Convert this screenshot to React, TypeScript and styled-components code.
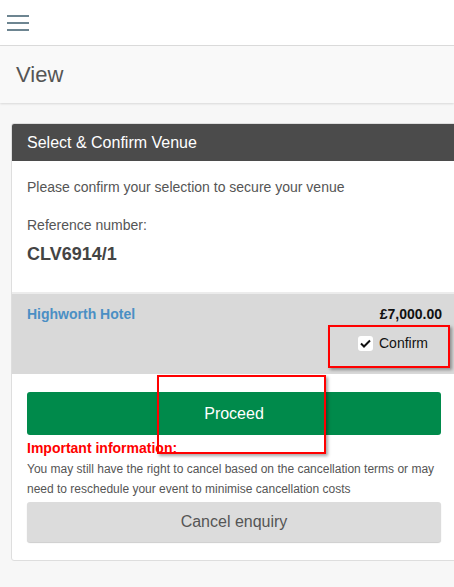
import React, { useState } from 'react';
import styled, { createGlobalStyle } from 'styled-components';

const GlobalStyle = createGlobalStyle`
  html, body {
    margin: 0;
    padding: 0;
    background: #f7f7f7;
    overflow: hidden;
  }
  body {
    font-family: "Liberation Sans", Arial, sans-serif;
    color: #555;
  }
`;

const Page = styled.div`
  width: 454px;
  height: 587px;
  position: relative;
  background: #f7f7f7;
`;

const TopBar = styled.div`
  height: 45px;
  background: #fff;
  border-bottom: 1px solid #dcdcdc;
  display: flex;
  align-items: center;
  padding-left: 7px;
`;

const Burger = styled.button`
  width: 22px;
  height: 16px;
  padding: 0;
  border: none;
  background: none;
  display: flex;
  flex-direction: column;
  justify-content: space-between;
  cursor: pointer;

  & > span {
    display: block;
    height: 2px;
    width: 22px;
    background: #6d8591;
  }
`;

const TitleBar = styled.div`
  height: 57px;
  background: #f9f9f9;
  box-shadow: 0 1px 2px rgba(0, 0, 0, 0.12);
  display: flex;
  align-items: center;
  padding-left: 16px;
`;

const Title = styled.h1`
  margin: 0;
  font-size: 22px;
  font-weight: normal;
  color: #555;
`;

const Card = styled.section`
  margin: 20px 0 0 11px;
  width: 445px;
  background: #fff;
  border: 1px solid #dedede;
  border-radius: 3px;
  overflow: hidden;
`;

const CardHeader = styled.div`
  height: 37px;
  background: #4b4b4b;
  color: #fff;
  font-size: 16px;
  display: flex;
  align-items: center;
  padding-left: 15px;
`;

const CardBody = styled.div`
  padding: 16px 15px 27px;
`;

const Text = styled.p<{ $gap?: number }>`
  margin: ${p => p.$gap ?? 0}px 0 0;
  font-size: 14px;
  color: #555;
  line-height: 20px;
`;

const RefNumber = styled.div`
  margin-top: 9px;
  font-size: 18px;
  font-weight: bold;
  color: #444;
`;

const Venue = styled.div`
  background: #d9d9d9;
  border-top: 2px solid #ececec;
  height: 82px;
  padding: 12px 15px 0;
  box-sizing: border-box;
  display: flex;
  justify-content: space-between;
`;

const VenueName = styled.a`
  font-size: 14px;
  font-weight: bold;
  color: #4b8fc4;
  text-decoration: none;
`;

const VenueSide = styled.div`
  display: flex;
  flex-direction: column;
  align-items: flex-end;
`;

const Price = styled.div`
  font-size: 14px;
  font-weight: bold;
  color: #111;
`;

const ConfirmLabel = styled.label`
  margin-top: 13px;
  margin-right: 14px;
  display: flex;
  align-items: center;
  gap: 6px;
  font-size: 14px;
  color: #111;
  cursor: pointer;
`;

const CheckBox = styled.span`
  width: 15px;
  height: 15px;
  border-radius: 3px;
  background: #fff;
  display: flex;
  align-items: center;
  justify-content: center;
`;

const Actions = styled.div`
  padding: 18px 15px 18px;
`;

const Button = styled.button<{ $primary?: boolean }>`
  width: 414px;
  height: ${p => (p.$primary ? '43px' : '40px')};
  border: none;
  border-radius: 3px;
  font-family: inherit;
  font-size: 16px;
  cursor: pointer;
  background: ${p => (p.$primary ? '#008a4b' : '#dcdcdc')};
  color: ${p => (p.$primary ? '#fff' : '#555')};
  box-shadow: ${p => (p.$primary ? 'none' : '0 1px 1px rgba(0,0,0,0.2)')};
`;

const Important = styled.div`
  margin-top: 5px;
  font-size: 14px;
  font-weight: bold;
  color: #ff0000;
`;

const Small = styled.p`
  margin: 3px 0 3px;
  font-size: 12px;
  line-height: 20px;
  color: #555;
`;

const Highlight = styled.div<{ $x: number; $y: number; $w: number; $h: number }>`
  position: absolute;
  left: ${p => p.$x}px;
  top: ${p => p.$y}px;
  width: ${p => p.$w}px;
  height: ${p => p.$h}px;
  box-sizing: border-box;
  border: 2px solid #f00;
  box-shadow: 2px 2px 3px rgba(0, 0, 0, 0.35);
  pointer-events: none;
`;

export default function App() {
  const [confirmed, setConfirmed] = useState(true);

  return (
    <Page>
      <GlobalStyle />
      <TopBar>
        <Burger aria-label="menu">
          <span />
          <span />
          <span />
        </Burger>
      </TopBar>
      <TitleBar>
        <Title>View</Title>
      </TitleBar>

      <Card>
        <CardHeader>Select &amp; Confirm Venue</CardHeader>
        <CardBody>
          <Text>Please confirm your selection to secure your venue</Text>
          <Text $gap={18}>Reference number:</Text>
          <RefNumber>CLV6914/1</RefNumber>
        </CardBody>
        <Venue>
          <VenueName href="#">Highworth Hotel</VenueName>
          <VenueSide>
            <Price>£7,000.00</Price>
            <ConfirmLabel onClick={() => setConfirmed(c => !c)}>
              <CheckBox>
                {confirmed && (
                  <svg width="11" height="9" viewBox="0 0 11 9">
                    <path d="M1 4.5 L4 7.5 L10 1.5" fill="none" stroke="#111" strokeWidth="2" />
                  </svg>
                )}
              </CheckBox>
              Confirm
            </ConfirmLabel>
          </VenueSide>
        </Venue>
        <Actions>
          <Button $primary>Proceed</Button>
          <Important>Important information:</Important>
          <Small>
            You may still have the right to cancel based on the cancellation terms or may need to
            reschedule your event to minimise cancellation costs
          </Small>
          <Button>Cancel enquiry</Button>
        </Actions>
      </Card>

      <Highlight $x={328} $y={325} $w={122} $h={43} />
      <Highlight $x={157} $y={375} $w={169} $h={79} />
    </Page>
  );
}
